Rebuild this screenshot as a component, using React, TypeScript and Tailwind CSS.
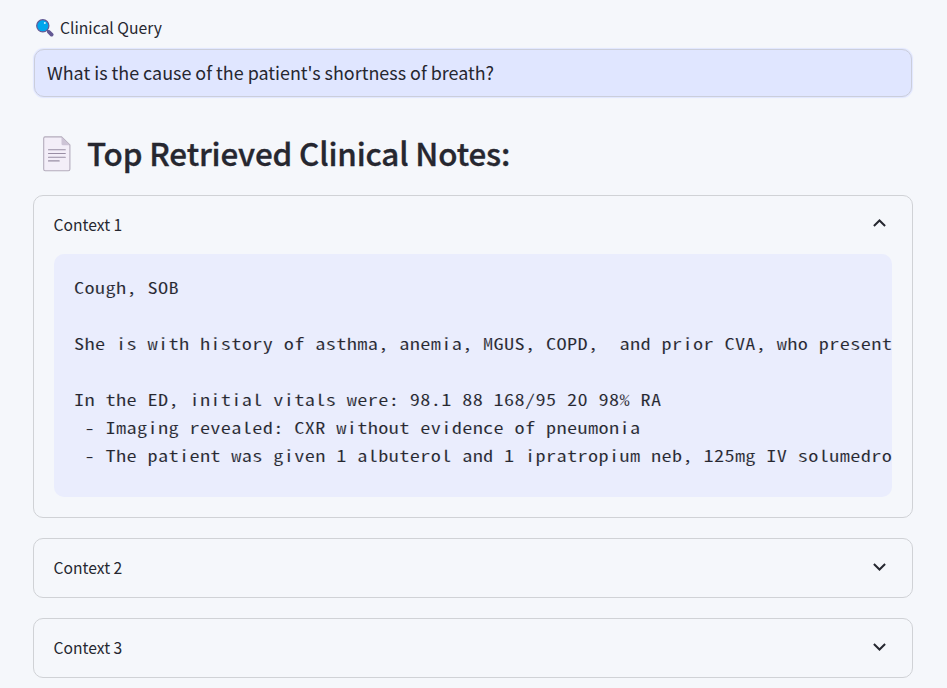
import React from "react";

const sans = "font-['Noto_Sans_CJK_SC','Open_Sans',sans-serif]";

const note = `Cough, SOB

She is with history of asthma, anemia, MGUS, COPD,  and prior CVA, who present

In the ED, initial vitals were: 98.1 88 168/95 20 98% RA
 - Imaging revealed: CXR without evidence of pneumonia
 - The patient was given 1 albuterol and 1 ipratropium neb, 125mg IV solumedro`;

function SearchIcon() {
  return (
    <svg className="h-[18px] w-[18px] shrink-0" viewBox="0 0 18 18">
      <path d="M11 11 12.5 12.5" stroke="#635994" strokeWidth="2" />
      <path d="M13 13 15.6 15.6" stroke="#635994" strokeWidth="3.8" strokeLinecap="round" />
      <circle cx="6.8" cy="6.8" r="6.1" fill="#00a6ed" stroke="#635994" strokeWidth="1.2" />
      <circle cx="8.8" cy="4" r="1" fill="#d8f4ff" />
    </svg>
  );
}

function PageIcon() {
  return (
    <svg className="mt-[2px] h-[36px] w-[28px] shrink-0" viewBox="0 0 28 36">
      <path d="M2 .9H18.5L26.9 9V33.2a1.6 1.6 0 0 1-1.6 1.6H2.2A1.6 1.6 0 0 1 .7 33.2V2.2A1.5 1.5 0 0 1 2 .9Z" fill="#f3eef8" stroke="#b4acbc" strokeWidth="1.1" />
      <path d="M18.5.9 26.9 9.3H20a1.5 1.5 0 0 1-1.5-1.5Z" fill="#cdc4d6" />
      <path d="M5.5 13.8H22.3M5.5 17.5H22.3M5.5 21.2H22.3M5.5 24.9H16.2" stroke="#998ea4" strokeWidth="1.1" strokeLinecap="round" />
    </svg>
  );
}

function Chevron({ up = false }: { up?: boolean }) {
  return (
    <svg className={`mr-[6px] h-2 w-[13px] shrink-0 ${up ? "mb-[4px]" : "mb-[2px]"}`} viewBox="0 0 13 8" fill="none" stroke="#262730" strokeWidth="2">
      <path d={up ? "M.9 7 6.5 1.5 12.1 7" : "M.9 1 6.5 6.5 12.1 1"} />
    </svg>
  );
}

function Panel({ title, children }: { title: string; children?: React.ReactNode }) {
  return (
    <section className="rounded-[10px] border border-[#d0d2d6] px-5">
      <div className="flex h-[58px] items-center justify-between">
        <span className="-ml-[0.4px] text-[15.65px] leading-[24px]">{title}</span>
        <Chevron up={!!children} />
      </div>
      {children}
    </section>
  );
}

export default function App() {
  return (
    <main className={`h-[688px] w-full overflow-hidden bg-[#f5f7fb] pr-[34px] pl-[33px] text-[#262730] ${sans}`}>
      <label className="flex h-[49px] items-center gap-[6px] pt-[7px] pl-[3px] text-[15.7px]">
        <SearchIcon />
        Clinical Query
      </label>
      <div className="mr-px ml-px flex h-12 items-center rounded-[10px] border border-[#cbcedb] bg-[#e0e6ff] px-[12px] pb-[2px] text-[17.93px] shadow-[0_0_1px_1px_#e0e6ff]">
        What is the cause of the patient's shortness of breath?
      </div>
      <h1 className="mt-[28px] flex h-[56px] items-center gap-[16px] pl-[10px] text-[31.4px] font-medium tracking-[-0.15px] [-webkit-text-stroke:0.35px_#262730]">
        <PageIcon />
        Top Retrieved Clinical Notes:
      </h1>
      <div className="mt-[14px] flex flex-col gap-5">
        <Panel title="Context 1">
          <div className="mb-5 h-[243px] overflow-hidden rounded-[10px] bg-[#eaedfd] pt-5 pl-5">
            <pre className="w-[635px] origin-left scale-x-[1.29] font-['Noto_Sans_Mono_CJK_SC','Liberation_Mono',monospace] text-[15.75px] leading-7 tracking-[0.257px] [-webkit-text-stroke:0.1px_#eaedfd]">
              {note}
            </pre>
          </div>
        </Panel>
        <Panel title="Context 2" />
        <Panel title="Context 3" />
      </div>
    </main>
  );
}
